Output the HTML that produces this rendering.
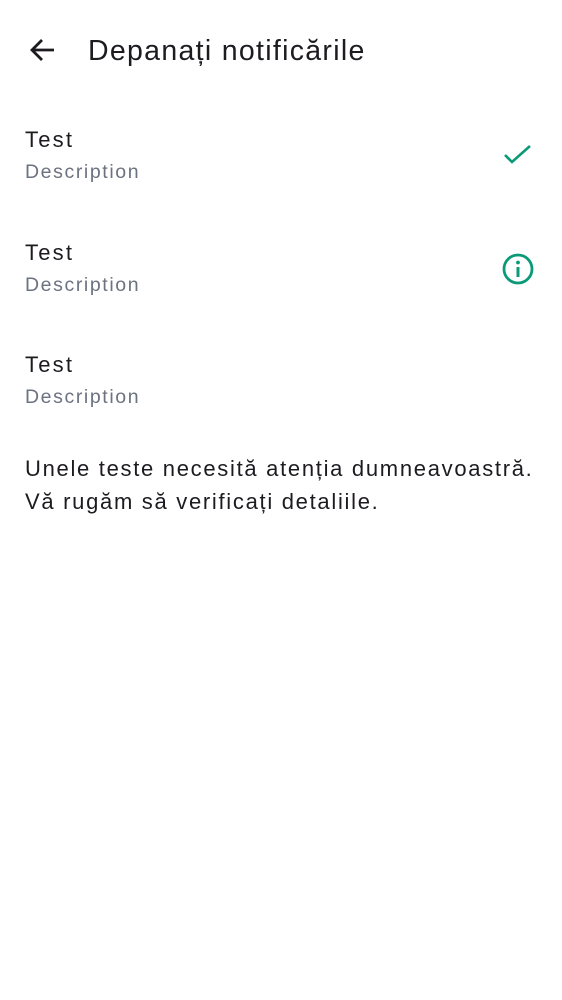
<!DOCTYPE html>
<html><head><meta charset="utf-8"><style>
body{margin:0;width:562px;height:1000px;background:#fff;font-family:"Liberation Sans",sans-serif;position:relative;overflow:hidden}
.a{position:absolute;white-space:nowrap}
.t{font-size:22px;color:#1d1b20;letter-spacing:1.7px}
.d{font-size:19.5px;color:#6b7280;letter-spacing:1.6px}
</style></head><body>
<svg class="a" style="left:28px;top:36px" width="30" height="28" viewBox="0 0 30 28"><path d="M26 14H5M14 4L4 14l10 10" fill="none" stroke="#1d1b20" stroke-width="2.8"/></svg>
<div class="a" style="left:88px;top:35px;font-size:28.5px;color:#1d1b20;letter-spacing:1.3px">Depanați notificările</div>

<div class="a t" style="left:25px;top:127px;letter-spacing:2.2px">Test</div>
<div class="a d" style="left:25px;top:161px">Description</div>
<svg class="a" style="left:502px;top:144px" width="30" height="24" viewBox="0 0 30 24"><path d="M3 11l7 7L28 2" fill="none" stroke="#0a9a77" stroke-width="2.6"/></svg>

<div class="a t" style="left:25px;top:240px;letter-spacing:2.2px">Test</div>
<div class="a d" style="left:25px;top:274px">Description</div>
<svg class="a" style="left:500px;top:252px" width="36" height="34" viewBox="0 0 36 34"><circle cx="18" cy="17" r="14" fill="none" stroke="#0a9a77" stroke-width="2.8"/><rect x="16.5" y="15" width="3" height="10" fill="#0a9a77"/><circle cx="18" cy="10.5" r="1.9" fill="#0a9a77"/></svg>

<div class="a t" style="left:25px;top:352px;letter-spacing:2.2px">Test</div>
<div class="a d" style="left:25px;top:386px">Description</div>

<div class="a t" style="left:25px;top:452px;line-height:33px">Unele teste necesită atenția dumneavoastră.<br>Vă rugăm să verificați detaliile.</div>
</body></html>
